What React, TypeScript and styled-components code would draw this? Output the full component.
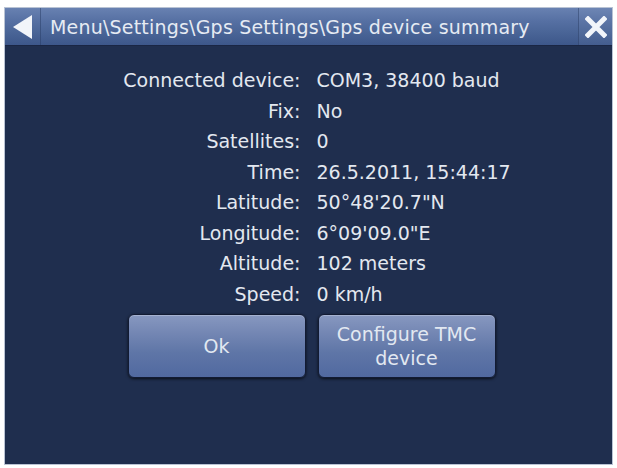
import React from "react";
import styled, { createGlobalStyle } from "styled-components";

const Global = createGlobalStyle`
  html, body { margin: 0; padding: 0; background: #ffffff; }
  body { font-family: "DejaVu Sans", "Liberation Sans", sans-serif; }
`;

const Screen = styled.div`
  box-sizing: border-box;
  width: 609px;
  height: 458px;
  margin: 7px 0 0 4px;
  background: #1f2e4e;
  border: 1px solid #b9c3d4;
  display: flex;
  flex-direction: column;
  overflow: hidden;
`;

const TitleBar = styled.div`
  height: 37px;
  flex: none;
  display: flex;
  align-items: stretch;
  background: linear-gradient(180deg, #6881b1 0%, #5670a3 35%, #4a6597 65%, #3d578a 100%);
  border-bottom: 1px solid #1a2644;
`;

const IconCell = styled.div<{ side: "left" | "right" }>`
  width: ${(p) => (p.side === "left" ? "35px" : "33px")};
  flex: none;
  display: flex;
  align-items: center;
  justify-content: center;
  ${(p) =>
    p.side === "left"
      ? "border-right: 1px solid rgba(40,60,100,0.5);"
      : "border-left: 1px solid rgba(40,60,100,0.5); background: rgba(255,255,255,0.04);"}
`;

const Title = styled.div`
  flex: 1;
  display: flex;
  align-items: center;
  padding-left: 9px;
  color: #e6ebf3;
  font-size: 19px;
  white-space: nowrap;
  letter-spacing: 0.2px;
`;

const Body = styled.div`
  flex: 1;
  display: flex;
  flex-direction: column;
  padding-top: 19px;
`;

const InfoGrid = styled.div`
  display: grid;
  grid-template-columns: 1fr 1fr;
  column-gap: 16px;
  grid-auto-rows: 30.5px;
  align-items: center;
  color: #e3e8f0;
  font-size: 19px;
`;

const Label = styled.div`
  text-align: right;
  white-space: nowrap;
`;

const Value = styled.div`
  text-align: left;
  white-space: nowrap;
`;

const ButtonRow = styled.div`
  display: flex;
  justify-content: center;
  gap: 12px;
  margin-top: 5px;
  padding-left: 6px;
`;

const Button = styled.button`
  width: 178px;
  height: 64px;
  border-radius: 6px;
  border: 1px solid #121b33;
  box-shadow: 0 1px 3px rgba(0, 0, 0, 0.7), inset 0 1px 0 rgba(255, 255, 255, 0.25);
  background: linear-gradient(180deg, #8798c0 0%, #7386b3 30%, #5f76a7 60%, #5169a0 100%);
  color: #e2e8f1;
  font-family: "DejaVu Sans", "Liberation Sans", sans-serif;
  font-size: 19px;
  line-height: 24px;
  padding: 0 6px;
  text-align: center;
`;

const rows: [string, string][] = [
  ["Connected device:", "COM3, 38400 baud"],
  ["Fix:", "No"],
  ["Satellites:", "0"],
  ["Time:", "26.5.2011, 15:44:17"],
  ["Latitude:", "50°48'20.7\"N"],
  ["Longitude:", "6°09'09.0\"E"],
  ["Altitude:", "102 meters"],
  ["Speed:", "0 km/h"],
];

export default function App() {
  return (
    <>
      <Global />
      <Screen>
        <TitleBar>
          <IconCell side="left">
            <svg width="22" height="26" viewBox="0 0 22 26">
              <polygon points="20,1 20,25 1,13" fill="#f2f5fa" />
            </svg>
          </IconCell>
          <Title>Menu\Settings\Gps Settings\Gps device summary</Title>
          <IconCell side="right">
            <svg width="22" height="22" viewBox="0 0 22 22">
              <path d="M3 3 L19 19 M19 3 L3 19" stroke="#f2f5fa" strokeWidth="5" strokeLinecap="square" />
            </svg>
          </IconCell>
        </TitleBar>
        <Body>
          <InfoGrid>
            {rows.map(([l, v]) => (
              <React.Fragment key={l}>
                <Label>{l}</Label>
                <Value>{v}</Value>
              </React.Fragment>
            ))}
          </InfoGrid>
          <ButtonRow>
            <Button>Ok</Button>
            <Button>
              Configure TMC
              <br />
              device
            </Button>
          </ButtonRow>
        </Body>
      </Screen>
    </>
  );
}
